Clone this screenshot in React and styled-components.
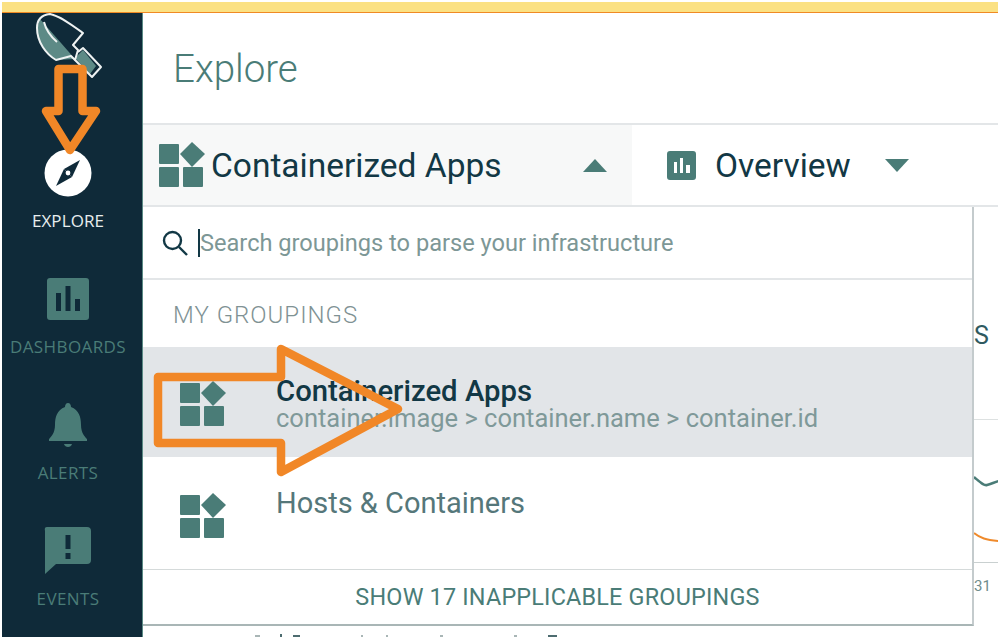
import styled, { createGlobalStyle } from "styled-components";

const GlobalStyle = createGlobalStyle`
  html, body { margin: 0; padding: 0; background: #fff; }
  body { font-family: Roboto, "Liberation Sans", sans-serif; }
`;

const teal = "#4a7c77";
const navy = "#0f2a39";

const Page = styled.div`
  position: relative;
  box-sizing: border-box;
  width: 1000px;
  height: 639px;
  padding: 2px;
  display: flex;
  flex-direction: column;
  overflow: hidden;
  background: #fff;
`;
const TopBar = styled.div`
  height: 10px;
  flex: none;
  background: #fbe183;
  border-bottom: 1px solid #f08a24;
`;
const Body = styled.div`
  flex: 1;
  min-height: 0;
  display: flex;
`;
const Sidebar = styled.nav`
  width: 141px;
  flex: none;
  box-sizing: border-box;
  padding-right: 8px;
  background: ${navy};
  border-right: 1px solid #5a8a85;
  display: flex;
  flex-direction: column;
  align-items: center;
`;
const Logo = styled.svg`
  width: 70px;
  height: 66px;
  flex: none;
  margin-bottom: 69px;
`;
const NavItem = styled.div`
  width: 100%;
  height: 126px;
  flex: none;
  display: flex;
  flex-direction: column;
  align-items: center;
  color: ${({ $active }) => ($active ? "#e8eeee" : teal)};
`;
const NavIcon = styled.svg`
  width: 50px;
  height: 50px;
  flex: none;
`;
const NavLabel = styled.div`
  margin-top: 14px;
  font-family: "Open Sans", sans-serif;
  font-size: 17px;
  line-height: 18px;
  white-space: nowrap;
  letter-spacing: ${({ $active }) => ($active ? "0.1px" : "0.4px")};
`;
const Main = styled.main`
  flex: 1;
  min-width: 0;
  display: flex;
  flex-direction: column;
`;
const Header = styled.header`
  height: 110px;
  flex: none;
  box-sizing: border-box;
  padding: 33px 0 0 30px;
  font-size: 38.5px;
  font-weight: 300;
  line-height: 46px;
  color: ${teal};
`;
const Tabs = styled.div`
  height: 84px;
  flex: none;
  box-sizing: border-box;
  display: flex;
  border-top: 2px solid #e3e6e8;
  border-bottom: 2px solid #e3e6e8;
`;
const Tab = styled.div`
  box-sizing: border-box;
  width: ${({ $w }) => $w}px;
  padding-left: ${({ $pl }) => $pl}px;
  display: flex;
  align-items: center;
  background: ${({ $open }) => ($open ? "#f7f8f8" : "#fff")};
  color: #123845;
  font-size: 33.5px;
`;
const TabName = styled.span`
  margin-left: ${({ $gap }) => $gap}px;
  width: ${({ $w }) => $w}px;
  white-space: nowrap;
`;
const Caret = styled.div`
  width: 0;
  height: 0;
  border-left: 12px solid transparent;
  border-right: 12px solid transparent;
  ${({ $up }) =>
    $up
      ? `border-bottom: 13px solid ${teal};`
      : `border-top: 13px solid ${teal};`}
`;
const Content = styled.div`
  flex: 1;
  min-height: 0;
  display: flex;
`;
const DropColumn = styled.div`
  width: 831px;
  flex: none;
  display: flex;
  flex-direction: column;
`;
const Dropdown = styled.div`
  height: 419px;
  flex: none;
  box-sizing: border-box;
  border-right: 2px solid #c4cbcd;
  border-bottom: 2px solid #a9b6b6;
  display: flex;
  flex-direction: column;
  background: #fff;
`;
const Search = styled.div`
  height: 73px;
  flex: none;
  box-sizing: border-box;
  border-bottom: 2px solid #e3e6e8;
  display: flex;
  align-items: center;
  padding: 0 0 0 18px;
  font-size: 23.6px;
  white-space: nowrap;
  color: #7d9796;
`;
const SearchCursor = styled.span`
  width: 2px;
  height: 28px;
  margin: 0 0 0 9px;
  background: #123845;
`;
const SectionLabel = styled.div`
  height: 67px;
  flex: none;
  box-sizing: border-box;
  padding: 19px 0 0 30px;
  font-size: 24px;
  line-height: 32px;
  font-weight: 300;
  letter-spacing: 1px;
  color: #7f9294;
`;
const Row = styled.div`
  height: ${({ $h }) => $h}px;
  flex: none;
  box-sizing: border-box;
  display: flex;
  align-items: flex-start;
  padding: ${({ $pad }) => $pad}px 0 0 37px;
  background: ${({ $selected }) => ($selected ? "#e2e5e8" : "#fff")};
  border-bottom: ${({ $line }) => ($line ? "1px solid #d5dada" : "none")};
`;
const GroupIcon = styled.svg`
  width: ${({ $size }) => $size}px;
  height: ${({ $size }) => $size}px;
  flex: none;
`;
const RowText = styled.div`
  margin: -5px 0 0 50px;
  display: flex;
  flex-direction: column;
`;
const RowTitle = styled.div`
  font-size: ${({ $bold }) => ($bold ? 29.3 : 29)}px;
  line-height: 30px;
  white-space: nowrap;
  font-weight: ${({ $bold }) => ($bold ? 500 : 400)};
  color: ${({ $bold }) => ($bold ? "#123845" : "#55777a")};
`;
const RowSub = styled.div`
  font-size: 25.5px;
  line-height: 24px;
  white-space: nowrap;
  color: #7f9999;
`;
const Footer = styled.div`
  flex: 1;
  display: flex;
  align-items: center;
  justify-content: center;
  font-size: 23.4px;
  color: ${teal};
  letter-spacing: 0.2px;
`;
const Fragments = styled.svg`
  width: 830px;
  height: 11px;
  flex: none;
  display: block;
`;
const Peek = styled.div`
  flex: 1;
  min-width: 0;
  display: flex;
  flex-direction: column;
  overflow: hidden;
`;
const PeekTitle = styled.div`
  height: 213px;
  flex: none;
  box-sizing: border-box;
  border-bottom: 1px solid #dde1e1;
  padding: 114px 0 0 0;
  font-size: 25px;
  line-height: 30px;
  color: #2f5a60;
`;
const PeekChart = styled.svg`
  width: 25px;
  height: 143px;
  flex: none;
  display: block;
`;
const PeekTick = styled.div`
  padding: 14px 0 0 0;
  font-size: 15px;
  line-height: 18px;
  color: #6f8c8c;
`;
const Overlay = styled.svg`
  position: absolute;
  left: 0;
  top: 0;
  width: 1000px;
  height: 639px;
  pointer-events: none;
`;

const Blocks = ({ size }) => (
  <GroupIcon $size={size} viewBox="0 0 46 46" fill={teal}>
    <rect x="0" y="2" width="20" height="20" rx="1" />
    <rect x="0" y="25" width="20" height="20" rx="1" />
    <rect x="24" y="25" width="20" height="20" rx="1" />
    <path d="M33 0 L46 12 L33 25 L21 12 Z" />
  </GroupIcon>
);

export default function App() {
  return (
    <Page>
      <GlobalStyle />
      <TopBar />
      <Body>
        <Sidebar>
          {/* viewBox is in page coordinates, easier to trace the shovel */}
          <Logo viewBox="33 13 70 66">
            <path d="M40 19 L75 59 L56 60 C46 54 37 42 37 28 Z" fill="#5d8a86" />
            <path d="M75 58 L83 50 L96 66 L90 74 Z" fill="#5d8a86" />
            <path d="M37 28 C37 20 41 15 50 14 C60 16 72 25 83 33 L73 45 L78 50 L75 60 L71 56 L56 60 C46 54 37 42 37 28 Z" fill="none" stroke="#eef2f2" strokeWidth="2" strokeLinejoin="round" />
            <path d="M78 52 L83 48 L101 67 L92 77 L75 60" fill="none" stroke="#eef2f2" strokeWidth="2" strokeLinejoin="round" />
            <path d="M44 22 C46 30 50 36 57 42" fill="none" stroke="#eef2f2" strokeWidth="2" />
          </Logo>
          <NavItem $active>
            <NavIcon viewBox="0 0 50 50">
              <circle cx="25" cy="25" r="23.5" fill="#fff" />
              <path d="M37 12 L29 29 L21 21 Z" fill={navy} />
              <path d="M13 38 L21 21 L29 29 Z" fill={navy} />
              <circle cx="25" cy="25" r="2.4" fill="#fff" />
            </NavIcon>
            <NavLabel $active>EXPLORE</NavLabel>
          </NavItem>
          <NavItem>
            <NavIcon viewBox="0 0 50 50">
              <path fillRule="evenodd" fill={teal} d="M7 4 H43 Q46 4 46 7 V43 Q46 46 43 46 H7 Q4 46 4 43 V7 Q4 4 7 4 Z M13 19 V37 H18 V19 Z M22.5 12 V37 H27.5 V12 Z M32 25 V37 H37 V25 Z" />
            </NavIcon>
            <NavLabel>DASHBOARDS</NavLabel>
          </NavItem>
          <NavItem>
            <NavIcon viewBox="0 0 50 50">
              <path fill={teal} d="M25 3 C27 3 28 5 28 7 C36 10 38 17 38 25 C38 33 42 37 44 39 V41 H6 V39 C8 37 12 33 12 25 C12 17 14 10 22 7 C22 5 23 3 25 3 Z" />
              <path fill={teal} d="M21 44 H29 C28 48 22 48 21 44 Z" />
            </NavIcon>
            <NavLabel>ALERTS</NavLabel>
          </NavItem>
          <NavItem>
            <NavIcon viewBox="0 0 50 50">
              <path fillRule="evenodd" fill={teal} d="M4 1 H44 Q48 1 48 5 V34 Q48 38 44 38 H13 L2 48 V5 Q1 1 4 1 Z M22.5 9 V23 H27.5 V9 Z M22.5 27 V33 H27.5 V27 Z" />
            </NavIcon>
            <NavLabel>EVENTS</NavLabel>
          </NavItem>
        </Sidebar>
        <Main>
          <Header>Explore</Header>
          <Tabs>
            <Tab $w={489} $pl={16} $open>
              <Blocks size={46} />
              <TabName $gap={6} $w={372}>Containerized Apps</TabName>
              <Caret $up />
            </Tab>
            <Tab $w={340} $pl={35}>
              <GroupIcon $size={29} viewBox="0 0 29 29">
                <path fillRule="evenodd" fill={teal} d="M3 0 H26 Q29 0 29 3 V26 Q29 29 26 29 H3 Q0 29 0 26 V3 Q0 0 3 0 Z M7 11 V22 H10 V11 Z M13 7 V22 H16 V7 Z M19 14 V22 H23 V14 Z" />
              </GroupIcon>
              <TabName $gap={19} $w={170}>Overview</TabName>
              <Caret />
            </Tab>
          </Tabs>
          <Content>
            <DropColumn>
              <Dropdown>
                <Search>
                  <svg width="28" height="28" viewBox="0 0 28 28" fill="none" stroke="#123845" strokeWidth="2.4">
                    <circle cx="11.5" cy="11.5" r="8.5" />
                    <path d="M18 18 L26 26" />
                  </svg>
                  <SearchCursor />
                  Search groupings to parse your infrastructure
                </Search>
                <SectionLabel>MY GROUPINGS</SectionLabel>
                <Row $selected $h={110} $pad={34}>
                  <Blocks size={46} />
                  <RowText>
                    <RowTitle $bold>Containerized Apps</RowTitle>
                    <RowSub>container.image &gt; container.name &gt; container.id</RowSub>
                  </RowText>
                </Row>
                <Row $h={113} $pad={36} $line>
                  <Blocks size={46} />
                  <RowText>
                    <RowTitle>Hosts &amp; Containers</RowTitle>
                  </RowText>
                </Row>
                <Footer>SHOW 17 INAPPLICABLE GROUPINGS</Footer>
              </Dropdown>
              <Fragments viewBox="0 0 830 11" fill="#4d6c70">
                <rect x="112" y="9" width="5" height="2" fill="#a9b6b6" />
                <rect x="137" y="8" width="2" height="3" />
                <rect x="150" y="9" width="7" height="2" />
                <rect x="218" y="9" width="2" height="2" fill="#a9b6b6" />
                <rect x="243" y="9" width="2" height="2" fill="#a9b6b6" />
                <rect x="297" y="9" width="3" height="2" fill="#a9b6b6" />
                <rect x="371" y="9" width="3" height="2" fill="#a9b6b6" />
                <rect x="405" y="9" width="9" height="2" />
              </Fragments>
            </DropColumn>
            <Peek>
              <PeekTitle>S</PeekTitle>
              <PeekChart viewBox="0 0 25 143" fill="none">
                <path d="M0 57 C6 62 10 66 13 65 C17 64 21 62 25 61" stroke={teal} strokeWidth="2.5" />
                <path d="M0 113 C6 118 12 120 25 121" stroke="#ef8a2c" strokeWidth="2" />
                <path d="M0 142.5 H25" stroke="#c9d0d0" strokeWidth="1" />
              </PeekChart>
              <PeekTick>31</PeekTick>
            </Peek>
          </Content>
        </Main>
      </Body>
      <Overlay viewBox="0 0 1000 639" fill="none" stroke="#f18727" strokeWidth="8.5" strokeLinejoin="round">
        <path d="M58.5 69 H82.5 V111 H96 L70 150 L46 111 H58.5 Z" />
        <path d="M158 377 H281 V349 L398 409 L281 472 V443 H158 Z" />
      </Overlay>
    </Page>
  );
}
